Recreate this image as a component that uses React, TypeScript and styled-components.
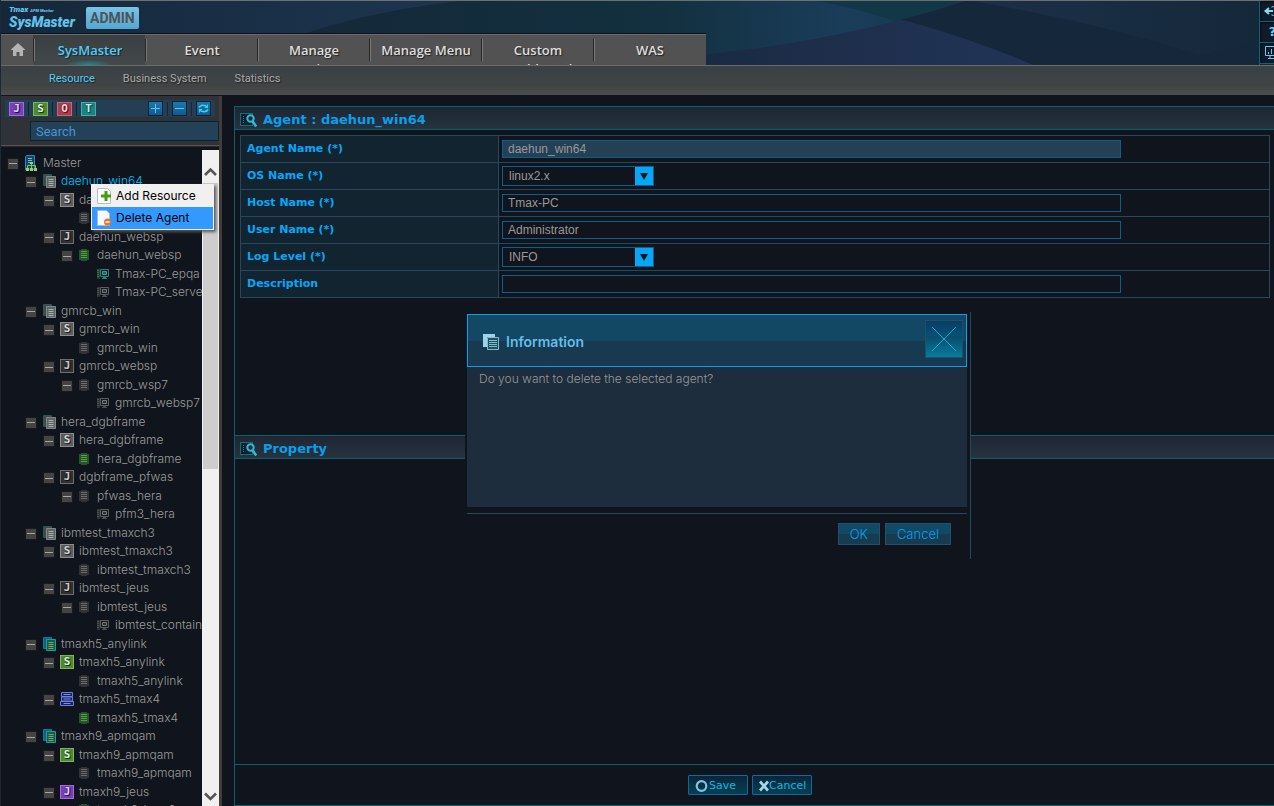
import React from "react";
import styled, { createGlobalStyle, css } from "styled-components";

const GlobalStyle = createGlobalStyle`
  *, *::before, *::after { box-sizing: border-box; }
  html, body, #root { height: 100%; }
  body {
    margin: 0;
    overflow: hidden;
    background: #10141c;
    color: #999;
    font-family: "Liberation Sans", Arial, sans-serif;
    font-size: 13px;
  }
  button, input, select { font: inherit; color: inherit; margin: 0; border-radius: 0; }
  button { cursor: pointer; padding: 0; }
  ul { list-style: none; margin: 0; padding: 0; }
  a { color: inherit; text-decoration: none; }
  svg { display: block; flex: none; }
`;

const Shell = styled.div`
  display: flex;
  flex-direction: column;
  height: 100%;
  border-left: 1px solid #1c2833;
  position: relative;
`;

/* ---------- header ---------- */

const Banner = styled.header`
  display: grid;
  grid-template-columns: minmax(0, 1fr) auto;
  height: 66px;
  border-top: 1px solid #6f6f6f;
  border-bottom: 1px solid #6c6b67;
  background: #15273a;
  overflow: hidden;
`;

const Backdrop = styled.svg`
  grid-area: 1 / 1 / 2 / 3;
  height: 64px;
`;

const BannerMain = styled.div`
  grid-area: 1 / 1 / 2 / 2;
  z-index: 1;
  display: flex;
  flex-direction: column;
  align-items: flex-start;
  justify-content: space-between;
`;

const Brand = styled.div`
  display: flex;
  gap: 8px;
  padding: 5px 0 0 8px;
`;

const Logo = styled.div`
  display: flex;
  flex-direction: column;
  width: 69px;
  font-family: Roboto, sans-serif;
  font-style: italic;
  font-weight: 900;
  color: #62c4ec;
  white-space: nowrap;
`;

const LogoSmall = styled.span`
  font-size: 8px;
  line-height: 8px;
  small { font-size: 4px; margin-left: 2px; }
`;

const LogoLarge = styled.span`
  font-size: 14px;
  line-height: 14px;
`;

const AdminTag = styled.span`
  height: 22px;
  margin-top: 1px;
  padding: 0 4px;
  border-radius: 2px;
  background: linear-gradient(#79c3e6, #55a6d2);
  color: #4d5458;
  font: 700 14px/22px Roboto, sans-serif;
`;

const MainNav = styled.nav`
  display: flex;
  height: 31px;
  padding-right: 1px;
  border-top: 1px solid #6d6b68;
  background: #525252;
  box-shadow: 0 -1px 0 #0b1220;
  overflow: hidden;
`;

const HomeLink = styled.a`
  display: grid;
  place-items: center;
  width: 32px;
  padding-left: 2px;
`;

const MainLink = styled.a<{ $active?: boolean }>`
  width: 112px;
  height: 31px;
  padding: 6px 15px 0 17px;
  text-align: center;
  font: 600 13px/19px "Open Sans", sans-serif;
  color: ${(p) => (p.$active ? "#4fcdfa" : "#dcdcdc")};
  text-shadow: 1px 1px 1px #222;
  background:
    linear-gradient(#292929, #292929) 0 4px / 1px 22px no-repeat,
    linear-gradient(#767676, #767676) 1px 4px / 1px 22px no-repeat
    ${(p) =>
      p.$active
        ? ", radial-gradient(ellipse 24px 5px at 56px 30px, #1d8b97, transparent), linear-gradient(#3a3f42, #43494b)"
        : ""};
`;

const WideLabel = styled.span`
  display: block;
  margin: 0 -12px;
`;

const SubNav = styled.nav`
  display: flex;
  align-items: flex-start;
  gap: 28px;
  height: 29px;
  padding: 4px 0 0 48px;
  background: linear-gradient(#394145, #414445 70%, #4e4e4e);
  flex: none;
`;

const SubLink = styled.a<{ $active?: boolean }>`
  font: 11px/18px Roboto, sans-serif;
  color: ${(p) => (p.$active ? "#4fcdfa" : "#a9a9a9")};
  text-shadow: 1px 1px 1px #222;
`;

const ToolRail = styled.div`
  grid-area: 1 / 2 / 2 / 3;
  z-index: 1;
  width: 15px;
  overflow: hidden;
  border-left: 1px solid #086478;
`;

const RailButton = styled.button`
  display: grid;
  place-items: center;
  width: 25px;
  height: 21px;
  border: 0;
  border-bottom: 1px solid #086478;
  background: #101b2a;
  box-shadow: inset 1px 1px 2px #070d16;
  font: 700 13px/18px "DejaVu Sans", sans-serif;
  color: #6fd0f2;
`;

/* ---------- sidebar ---------- */

const Body = styled.div`
  flex: 1;
  min-height: 0;
  display: flex;
  gap: 12px;
  padding-top: 1px;
`;

const Sidebar = styled.aside`
  display: flex;
  flex-direction: column;
  flex: none;
  width: 221px;
  border-right: 3px solid #423c39;
`;

const TreeTools = styled.div`
  display: flex;
  flex-direction: column;
  gap: 4px;
  height: 50px;
  padding-top: 4px;
  background: #2f3237;
  border-bottom: 1px solid #5a5350;
  box-shadow: 0 1px 0 #2a2a2d;
  margin-bottom: 4px;
`;

const ToolStrip = styled.div`
  display: flex;
  align-items: center;
  margin: 0 4px;
  height: 17px;
  padding: 0 4px;
  background: #223f54;
`;

const StripGap = styled.span`
  flex: 1;
`;

const Divider = styled.span`
  width: 1px;
  height: 14px;
  margin: 0 4px;
  background: #162637;
`;

const tones = {
  purple: ["#7a3fb8", "#a566e0", "#dcd0f5", "#241040"],
  green: ["#4f8a34", "#7fb45c", "#e2f2d8", "#123a12"],
  red: ["#a83f50", "#d0606e", "#f4d4d8", "#5a1018"],
  teal: ["#1d8282", "#3fb0a6", "#cfeee8", "#064040"],
  grey: ["#5d5d5d", "#8d8d8d", "#d6d6d6", "#222"],
  dark: ["#303030", "#6d6d6d", "#c9c9c9", "#111"],
} as const;
type Tone = keyof typeof tones;

const badge = css<{ $tone: Tone }>`
  display: grid;
  place-items: center;
  flex: none;
  height: 14px;
  border: 1px solid ${(p) => tones[p.$tone][1]};
  background: ${(p) => tones[p.$tone][0]};
  color: ${(p) => tones[p.$tone][2]};
  text-shadow: 0 0 2px ${(p) => tones[p.$tone][3]}, 1px 1px 0 ${(p) => tones[p.$tone][3]};
  font: 700 11px/12px "DejaVu Sans Mono", monospace;
`;
const BadgeButton = styled.button<{ $tone: Tone }>`${badge} width: 15px;`;
const Badge = styled.span<{ $tone: Tone }>`${badge} width: 14px;`;

const TreeAction = styled.button`
  display: grid;
  place-items: center;
  width: 15px;
  height: 15px;
  border: 1px solid #0c2233;
  background: linear-gradient(#1c78b0, #115a92);
`;

const SearchBox = styled.input`
  align-self: flex-end;
  width: 189px;
  height: 20px;
  padding: 0 5px;
  border: 1px solid #0c2330;
  background: #234157;
  color: #4694d2;
  font: 13px/18px Roboto, sans-serif;
  outline: none;
  &::placeholder { color: #4694d2; opacity: 1; }
`;

const TreePane = styled.div`
  flex: 1;
  min-height: 0;
  display: flex;
  position: relative;
`;

const Tree = styled.ul`
  flex: 1;
  min-width: 0;
  padding-top: 3px;
  overflow: hidden;
`;

const TreeRow = styled.li<{ $level: number }>`
  display: flex;
  align-items: center;
  height: 19px;
  padding-left: ${(p) => p.$level * 18 + 6}px;
  white-space: nowrap;
  &:nth-child(even) { height: 18px; }
`;

const Toggle = styled.button<{ $leaf?: boolean }>`
  display: grid;
  place-items: center;
  flex: none;
  width: 12px;
  height: 12px;
  margin-top: 2px;
  border: 1px solid #1a1a1c;
  background: #444;
  visibility: ${(p) => (p.$leaf ? "hidden" : "visible")};
`;

const NodeIcon = styled.span`
  display: grid;
  place-items: center;
  flex: none;
  width: 24px;
`;

const NodeLink = styled.a<{ $selected?: boolean }>`
  font: 300 12px/18px Inter, sans-serif;
  color: ${(p) => (p.$selected ? "#00c0ff" : "#9b9b9b")};
`;

const ScrollTrack = styled.div`
  display: flex;
  flex-direction: column;
  width: 17px;
  padding: 17px 1px 4px 0;
  background: #f0f0f0;
`;

const ScrollArrow = styled.button`
  display: grid;
  place-items: center;
  height: 10px;
  border: 0;
  background: none;
`;

const ScrollThumb = styled.div`
  height: 45%;
  margin: 6px 0 auto 1px;
  background: #cdcdcd;
`;

const ContextMenu = styled.ul`
  position: absolute;
  top: 34px;
  left: 90px;
  width: 123px;
  padding: 1px;
  background: #f0f0f0;
  box-shadow: 2px 2px 3px #555;
`;

const MenuItem = styled.button<{ $hot?: boolean }>`
  display: flex;
  align-items: center;
  gap: 5px;
  width: 100%;
  height: 22px;
  padding: 0 4px 0 5px;
  border: 0;
  background: ${(p) => (p.$hot ? "#3399ff" : "transparent")};
  color: #000;
  font: 12px/22px Inter, sans-serif;
  white-space: nowrap;
`;

/* ---------- main panel ---------- */

const Main = styled.main`
  flex: 1;
  min-width: 0;
  display: flex;
  flex-direction: column;
  margin-top: 10px;
  border-left: 1px solid #06606e;
  border-bottom: 1px solid #06606e;
`;

const Section = styled.section<{ $grow?: boolean }>`
  flex: ${(p) => (p.$grow ? "1" : "0 0 auto")};
  min-height: ${(p) => (p.$grow ? "0" : "329px")};
`;

const SectionTitle = styled.h2`
  display: flex;
  align-items: center;
  gap: 5px;
  height: 24px;
  margin: 0;
  padding: 3px 5px 0;
  border-top: 1px solid #06606e;
  border-bottom: 1px solid #06606e;
  background: linear-gradient(#1d2632, #283340);
  color: #05a0ee;
  font: 700 13px/20px "DejaVu Sans", sans-serif;
`;

const FormTable = styled.table`
  width: calc(100% - 9px);
  margin: 5px 4px 0 5px;
  border-collapse: collapse;
  th, td { height: 27px; padding: 0 3px; border: 1px solid #23485f; }
  th {
    width: 258px;
    padding: 0 6px 1px;
    background: #132431;
    text-align: left;
    color: #05a8f8;
    font: 700 11px/14px "DejaVu Sans", sans-serif;
  }
`;

const TextField = styled.input`
  display: block;
  width: 81%;
  height: 18px;
  padding: 0 5px;
  border: 1px solid #0b5f8a;
  background: ${(p) => (p.readOnly ? "#234055" : "#10141c")};
  font-size: 12px;
  outline: none;
`;

const SelectFrame = styled.span`
  display: flex;
  width: 152px;
  height: 20px;
  border: 1px solid #0b5f8a;
`;

const SelectField = styled.select`
  flex: 1;
  appearance: none;
  padding: 0 6px;
  border: 0;
  background: #10141c;
  font-size: 12px;
  outline: none;
`;

const SelectArrow = styled.span`
  display: grid;
  place-items: center;
  width: 18px;
  background: #05a8f8;
`;

const Footer = styled.footer`
  display: flex;
  justify-content: center;
  gap: 4px;
  height: 41px;
  padding: 10px 9px 0 0;
  border-top: 1px solid #06606e;
`;

const FooterButton = styled.button`
  display: flex;
  align-items: center;
  width: 60px;
  height: 20px;
  padding: 1px 0 0 6px;
  border: 1px solid #0b6aa5;
  border-radius: 1px;
  background: linear-gradient(#0c2538, #063f52);
  color: #0bb8e8;
  font: 11px/18px "DejaVu Sans", sans-serif;
`;

/* ---------- dialog ---------- */

const Dialog = styled.div`
  position: absolute;
  top: 312px;
  left: 464px;
  width: 506px;
  padding: 2px 3px 0 2px;
  background: #10141c;
  border-right: 1px solid #23485f;
`;

const DialogHead = styled.div`
  display: flex;
  align-items: center;
  height: 53px;
  padding: 2px 3px 6px 15px;
  border: 1px solid #05a0f0;
  background: linear-gradient(#124863 51%, #173a50 51%);
`;

const DialogTitle = styled.h3`
  flex: 1;
  margin: 6px 0 0 6px;
  color: #62bfe8;
  font: 600 14px/18px Inter, sans-serif;
`;

const CloseButton = styled.button`
  display: grid;
  place-items: center;
  width: 38px;
  height: 38px;
  border: 1px solid #1d506c;
  background: linear-gradient(#073e62, #075078 42%, #064c68 42%, #067ba0);
`;

const DialogBody = styled.p`
  margin: 0;
  height: 140px;
  padding: 3px 12px;
  background: #1d2d3d;
  color: #989898;
  font: 300 12px/18px Inter, sans-serif;
`;

const DialogActions = styled.div`
  display: flex;
  justify-content: flex-end;
  gap: 5px;
  height: 46px;
  margin-top: 6px;
  padding: 9px 16px 0;
  border-top: 1px solid #23485f;
`;

const DialogButton = styled.button`
  height: 22px;
  padding: 0 11px;
  border: 1px solid #23506e;
  background: linear-gradient(#124a66 50%, #173c50 50%);
  color: #05a0f0;
  font: 300 13px/20px Inter, sans-serif;
`;

/* ---------- icons ---------- */

const MagnifyIcon = () => (
  <svg width="18" height="16" viewBox="0 0 18 16">
    <rect x=".5" y="1.500" width="12" height="12" fill="#0d2029" stroke="#0a6f80" />
    <path d="M3 4.500h2M3 6.500h2M3 8.500h2M3 10.500h2" stroke="#397180" strokeDasharray="1 1" />
    <circle cx="10.500" cy="6.500" r="3.200" fill="#122a36" stroke="#35b8d8" strokeWidth="2" />
    <path d="M12.700 9.500l3.500 5" stroke="#35b8d8" strokeWidth="2.500" />
  </svg>
);

const MasterIcon = () => (
  <svg width="14" height="16" viewBox="0 0 14 16">
    <path d="M2.500 .500h8v14H1.500V2z" fill="#15456c" stroke="#2788bb" />
    <path d="M4 3.500h4M4 5.500h4M4 7.500h4" stroke="#67bedb" />
    <path d="M7.500 8v3M3.500 14v-3.500h8V14M7.500 10v4" stroke="#91bd54" fill="none" />
    <path d="M6 7h3v2H6zM2 13h3v3H2zM6 13h3v3H6zM10 13h3v3h-3z" fill="#a1cf5c" />
  </svg>
);

const AgentIcon = ({ on }: { on?: boolean }) => (
  <svg width="13" height="14" viewBox="0 0 13 14">
    <path d="M.500 .500h8v11h-8z" fill={on ? "#12627d" : "#3f4a4d"} stroke={on ? "#107a96" : "#2c5558"} />
    <path d="M3.500 2.500h9v11h-9z" fill={on ? "#135c52" : "#5e6464"} stroke={on ? "#10a0a6" : "#7d8888"} />
    <path d="M5.500 5.500h5M5.500 7.500h5M5.500 9.500h5M5.500 11.500h5" stroke={on ? "#8aa349" : "#a9aeae"} />
  </svg>
);

const ServerIcon = ({ on }: { on?: boolean }) => (
  <svg width="13" height="12" viewBox="0 0 13 12">
    <path d="M2 0h6v1h2v10H8v1H2v-1H0V1h2z" fill={on ? "#245233" : "#303236"} />
    <path d="M2 2.500h6M2 4.500h6M2 6.500h6M2 8.500h6" stroke={on ? "#59a22c" : "#6a6c6e"} />
  </svg>
);

const ContainerIcon = ({ on }: { on?: boolean }) => (
  <svg width="12" height="12" viewBox="0 0 12 12">
    <path d="M0 1h3v10H0z" fill={on ? "#1e4433" : "#303236"} />
    <path d="M0 2.500h2M0 4.500h2M0 6.500h2M0 8.500h2" stroke={on ? "#2f7a4a" : "#4c4e50"} />
    <path d="M3.500 1.500h8v7h-8z" fill="#15191f" stroke={on ? "#2c8274" : "#5a5c5e"} />
    <path d="M5.500 3.500h4v3h-4z" fill={on ? "#1c6470" : "#2c2e32"} stroke={on ? "#2ba4a5" : "#77797b"} />
    <path d="M5 10.500h5M6 9.500h3" stroke={on ? "#2c8274" : "#4a4c4e"} />
  </svg>
);

const TmaxIcon = () => (
  <svg width="14" height="14" viewBox="0 0 14 14">
    <path d="M1.500 .500h11v4h-11zM1.500 5h11v4h-11zM.500 9.500h13v4H.500z" fill="#14206a" stroke="#6d80d0" />
    <path d="M3.500 2.500h7M3.500 7h7M3.500 11.500h7" stroke="#7d8ee0" />
  </svg>
);

const DialogGlyph = styled.svg`
  align-self: center;
  margin-top: 8px;
`;

const DialogIcon = () => (
  <DialogGlyph width="17" height="17" viewBox="0 0 17 17">
    <path d="M0 0h12v3H4v10H0z" fill="#9ed4ea" />
    <path d="M4.500 3.500h11v12h-11z" fill="#205064" stroke="#83bcc9" />
    <path d="M6 6.500h8M6 8.500h8M6 10.500h8M6 12.500h8" stroke="#83bcc9" />
  </DialogGlyph>
);

const Chevron = ({ down }: { down?: boolean }) => (
  <svg width="13" height="10" viewBox="0 0 13 10">
    <path d={down ? "M1 1.500l5.500 5.500L12 1.500" : "M1 8l5.500-5.500L12 8"} fill="none" stroke="#555" strokeWidth="2.600" />
  </svg>
);

/* ---------- data ---------- */

type Kind = "master" | "agent" | "agentOn" | "S" | "J" | "SOn" | "JOn" | "tmax" | "server" | "serverOn" | "container" | "containerOn";

const nodes: [number, Kind, string, boolean?][] = [
  [0, "master", "Master"],
  [1, "agent", "daehun_win64"],
  [2, "S", "daehun_win64"],
  [3, "server", "daehun_win64", true],
  [2, "J", "daehun_websp"],
  [3, "serverOn", "daehun_websp"],
  [4, "containerOn", "Tmax-PC_epqa", true],
  [4, "container", "Tmax-PC_server", true],
  [1, "agent", "gmrcb_win"],
  [2, "S", "gmrcb_win"],
  [3, "server", "gmrcb_win", true],
  [2, "J", "gmrcb_websp"],
  [3, "server", "gmrcb_wsp7"],
  [4, "container", "gmrcb_websp7", true],
  [1, "agent", "hera_dgbframe"],
  [2, "S", "hera_dgbframe"],
  [3, "serverOn", "hera_dgbframe", true],
  [2, "J", "dgbframe_pfwas"],
  [3, "server", "pfwas_hera"],
  [4, "container", "pfm3_hera", true],
  [1, "agent", "ibmtest_tmaxch3"],
  [2, "S", "ibmtest_tmaxch3"],
  [3, "server", "ibmtest_tmaxch3", true],
  [2, "J", "ibmtest_jeus"],
  [3, "server", "ibmtest_jeus"],
  [4, "container", "ibmtest_container", true],
  [1, "agentOn", "tmaxh5_anylink"],
  [2, "SOn", "tmaxh5_anylink"],
  [3, "server", "tmaxh5_anylink", true],
  [2, "tmax", "tmaxh5_tmax4"],
  [3, "serverOn", "tmaxh5_tmax4", true],
  [1, "agentOn", "tmaxh9_apmqam"],
  [2, "SOn", "tmaxh9_apmqam"],
  [3, "server", "tmaxh9_apmqam", true],
  [2, "JOn", "tmaxh9_jeus"],
  [3, "serverOn", "tmaxh9_here2_prod", true],
];

const iconFor = (kind: Kind) => {
  switch (kind) {
    case "master": return <MasterIcon />;
    case "agent": return <AgentIcon />;
    case "agentOn": return <AgentIcon on />;
    case "S": return <Badge $tone="grey">S</Badge>;
    case "J": return <Badge $tone="dark">J</Badge>;
    case "SOn": return <Badge $tone="green">S</Badge>;
    case "JOn": return <Badge $tone="purple">J</Badge>;
    case "tmax": return <TmaxIcon />;
    case "server": return <ServerIcon />;
    case "serverOn": return <ServerIcon on />;
    case "container": return <ContainerIcon />;
    case "containerOn": return <ContainerIcon on />;
  }
};

const fields: { id: string; label: string; value: string; kind: "text" | "locked" | "select" }[] = [
  { id: "agent", label: "Agent Name (*)", value: "daehun_win64", kind: "locked" },
  { id: "os", label: "OS Name (*)", value: "linux2.x", kind: "select" },
  { id: "host", label: "Host Name (*)", value: "Tmax-PC", kind: "text" },
  { id: "user", label: "User Name (*)", value: "Administrator", kind: "text" },
  { id: "log", label: "Log Level (*)", value: "INFO", kind: "select" },
  { id: "desc", label: "Description", value: "", kind: "text" },
];

const filters: [string, Tone][] = [["J", "purple"], ["S", "green"], ["O", "red"], ["T", "teal"]];
const menu = ["SysMaster", "Event", "Manage Descriptor", "Manage Menu", "Custom Dashboard", "WAS"];

export default function App() {
  return (
    <Shell>
      <GlobalStyle />
      <Banner>
        <Backdrop width="1274" viewBox="0 0 1274 64" aria-hidden="true">
          <defs>
            <linearGradient id="left"><stop offset="0" stopColor="#15283b" /><stop offset="1" stopColor="#1d3550" /></linearGradient>
            <linearGradient id="mid"><stop offset="0" stopColor="#152637" /><stop offset=".6" stopColor="#12303f" /><stop offset=".85" stopColor="#1a3d5a" /><stop offset="1" stopColor="#12384a" /></linearGradient>
            <linearGradient id="low"><stop offset="0" stopColor="#16283c" /><stop offset="1" stopColor="#223457" /></linearGradient>
            <linearGradient id="far"><stop offset="0" stopColor="#1b3049" /><stop offset="1" stopColor="#15283a" /></linearGradient>
          </defs>
          <path d="M600 64V0H815Q930 20 1032 64z" fill="url(#low)" />
          <path d="M0 0H460Q370 10 300 34L200 64H0z" fill="url(#left)" />
          <path d="M460 0H964Q840 40 700 54L600 64H200L300 34Q370 10 460 0z" fill="url(#mid)" />
          <path d="M815 0H964Q930 11 894 20Q860 8 815 0z" fill="#123746" />
          <path d="M972 0H1259V40L1200 54Q1090 20 972 0z" fill="url(#far)" />
        </Backdrop>
        <BannerMain>
          <Brand>
            <Logo>
              <LogoSmall>Tmax<small>APM Monitor</small></LogoSmall>
              <LogoLarge>SysMaster</LogoLarge>
            </Logo>
            <AdminTag>ADMIN</AdminTag>
          </Brand>
          <MainNav>
            <HomeLink href="#home" aria-label="Home">
              <svg width="16" height="14" viewBox="0 0 16 14">
                <path d="M8 0l7.500 7H13v6H9.500V9h-3v4H3V7H.500z" fill="#b4b4b4" />
              </svg>
            </HomeLink>
            {menu.map((m) => (
              <MainLink key={m} href="#menu" $active={m === "SysMaster"}>
                {m === "Manage Menu" ? <WideLabel>{m}</WideLabel> : m}
              </MainLink>
            ))}
          </MainNav>
        </BannerMain>
        <ToolRail>
          <RailButton aria-label="Log out">
            <svg width="18" height="14" viewBox="0 0 18 14">
              <path d="M1 7h8M5 4L1.500 7 5 10" stroke="#7fdcf8" strokeWidth="2" fill="none" />
              <path d="M8 4V2.500h8v9H8V10" stroke="#49a5cf" fill="none" />
            </svg>
          </RailButton>
          <RailButton aria-label="Help">?</RailButton>
          <RailButton aria-label="Monitor">
            <svg width="16" height="14" viewBox="0 0 16 14">
              <path d="M.500 .500h14v9H.500zM5 10v3M3 12.500h9" stroke="#6fc4ec" fill="none" />
              <path d="M3.500 8V6M6.500 8V3M9.500 8V5" stroke="#6fc4ec" />
            </svg>
          </RailButton>
        </ToolRail>
      </Banner>
      <SubNav>
        <SubLink href="#resource" $active>Resource</SubLink>
        <SubLink href="#business">Business System</SubLink>
        <SubLink href="#statistics">Statistics</SubLink>
      </SubNav>

      <Body>
        <Sidebar>
          <TreeTools>
            <ToolStrip>
              {filters.map(([letter, tone], i) => (
                <React.Fragment key={letter}>
                  {i > 0 && <Divider />}
                  <BadgeButton $tone={tone}>{letter}</BadgeButton>
                </React.Fragment>
              ))}
              <StripGap />
              <TreeAction aria-label="Expand all">
                <svg width="11" height="11"><path d="M1 5.500h9M5.500 1v9" stroke="#5fc4f2" /></svg>
              </TreeAction>
              <Divider />
              <TreeAction aria-label="Collapse all">
                <svg width="11" height="11"><path d="M1 5.500h9" stroke="#5fc4f2" /></svg>
              </TreeAction>
              <Divider />
              <TreeAction aria-label="Refresh">
                <svg width="11" height="11" viewBox="0 0 11 11">
                  <path d="M1 4.500Q3 1 8 3M10 6.500Q8 10 3 8" stroke="#3fd0ee" strokeWidth="1.600" fill="none" />
                  <path d="M6.500 5H10V1zM4.500 6H1v4z" fill="#3fd0ee" />
                </svg>
              </TreeAction>
            </ToolStrip>
            <SearchBox aria-label="Search" placeholder="Search" />
          </TreeTools>
          <TreePane>
            <Tree>
              {nodes.map(([level, kind, name, leaf], i) => (
                <TreeRow key={i} $level={level}>
                  <Toggle $leaf={leaf} aria-label={`Collapse ${name}`}>
                    <svg width="8" height="1"><path d="M0 .5h8" stroke="#a5a5a5" /></svg>
                  </Toggle>
                  <NodeIcon>{iconFor(kind)}</NodeIcon>
                  <NodeLink href="#node" $selected={i === 1}>{name}</NodeLink>
                </TreeRow>
              ))}
            </Tree>
            <ScrollTrack>
              <ScrollArrow aria-label="Scroll up"><Chevron /></ScrollArrow>
              <ScrollThumb />
              <ScrollArrow aria-label="Scroll down"><Chevron down /></ScrollArrow>
            </ScrollTrack>
            <ContextMenu>
              <li>
                <MenuItem>
                  <svg width="14" height="16" viewBox="0 0 14 16">
                    <path d="M.500 .500h10l3 3v12H.500z" fill="#fff" stroke="#b5bcc4" />
                    <path d="M9 3v10M4 8h10" stroke="#3da010" strokeWidth="3" />
                  </svg>
                  Add Resource
                </MenuItem>
              </li>
              <li>
                <MenuItem $hot>
                  <svg width="14" height="16" viewBox="0 0 14 16">
                    <path d="M.500 .500h9l3 3v12H.500z" fill="#f7f9fc" stroke="#a9b8cc" />
                    <circle cx="10.500" cy="12" r="3.500" fill="#e8752c" />
                    <path d="M8.500 12h4" stroke="#fff" strokeWidth="1.500" />
                  </svg>
                  Delete Agent
                </MenuItem>
              </li>
            </ContextMenu>
          </TreePane>
        </Sidebar>

        <Main>
          <Section>
            <SectionTitle><MagnifyIcon />Agent : daehun_win64</SectionTitle>
            <FormTable>
              <tbody>
                {fields.map((f) => (
                  <tr key={f.id}>
                    <th scope="row"><label htmlFor={f.id}>{f.label}</label></th>
                    <td>
                      {f.kind === "select" ? (
                        <SelectFrame>
                          <SelectField id={f.id} defaultValue={f.value}><option>{f.value}</option></SelectField>
                          <SelectArrow>
                            <svg width="8" height="7"><path d="M0 0h8L4 7z" fill="#10141c" /></svg>
                          </SelectArrow>
                        </SelectFrame>
                      ) : (
                        <TextField id={f.id} defaultValue={f.value} readOnly={f.kind === "locked"} />
                      )}
                    </td>
                  </tr>
                ))}
              </tbody>
            </FormTable>
          </Section>
          <Section $grow>
            <SectionTitle><MagnifyIcon />Property</SectionTitle>
          </Section>
          <Footer>
            <FooterButton>
              <svg width="14" height="14"><circle cx="6.500" cy="7" r="4.800" fill="none" stroke="#7cc4e4" strokeWidth="2.200" /></svg>
              Save
            </FooterButton>
            <FooterButton>
              <svg width="10" height="12"><path d="M1 1.500l8 9M9 1.500l-8 9" stroke="#a5d8ec" strokeWidth="2.800" /></svg>
              Cancel
            </FooterButton>
          </Footer>
        </Main>
      </Body>

      <Dialog role="dialog" aria-labelledby="dialog-title">
        <DialogHead>
          <DialogIcon />
          <DialogTitle id="dialog-title">Information</DialogTitle>
          <CloseButton aria-label="Close">
            <svg width="26" height="26"><path d="M1 1l24 24M25 1L1 25" stroke="#2fa5cc" /></svg>
          </CloseButton>
        </DialogHead>
        <DialogBody>Do you want to delete the selected agent?</DialogBody>
        <DialogActions>
          <DialogButton>OK</DialogButton>
          <DialogButton>Cancel</DialogButton>
        </DialogActions>
      </Dialog>
    </Shell>
  );
}
